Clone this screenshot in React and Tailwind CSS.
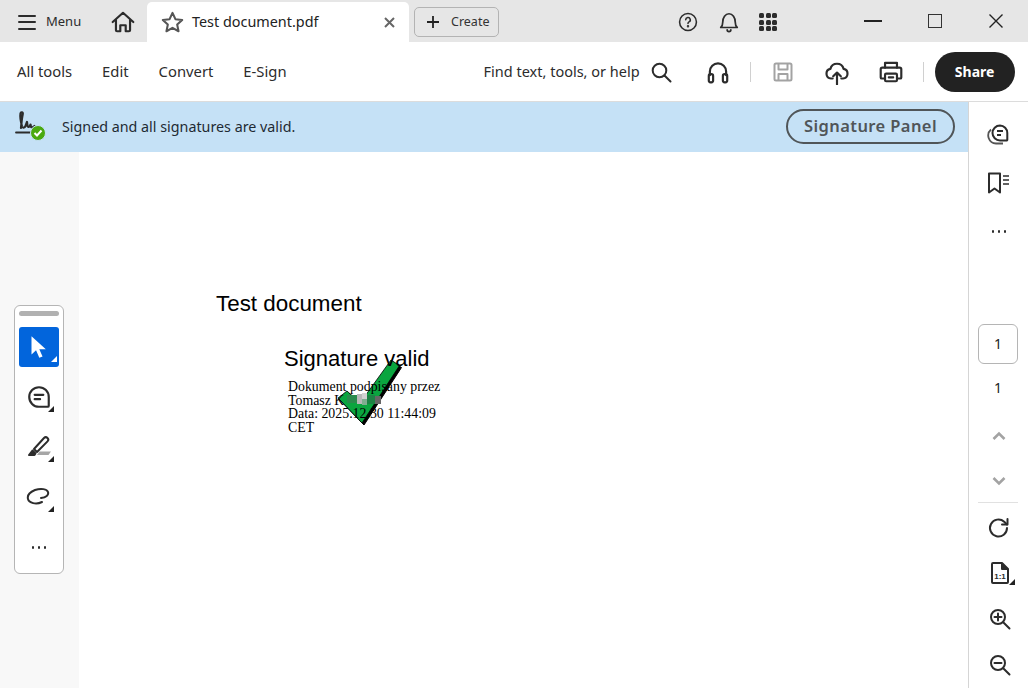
const ui = { fontFamily: '"Noto Sans", sans-serif' }

function Corner({ color = 'border-b-[#222]', className = '' }) {
  return <span className={`absolute w-0 h-0 border-l-[6px] border-l-transparent border-b-[6px] ${color} ${className}`} />
}

function Icon({ size = 24, children, className = '', stroke = '#2c2c2c', sw = 2 }) {
  return (
    <svg width={size} height={size} viewBox="0 0 24 24" fill="none" stroke={stroke} strokeWidth={sw} strokeLinecap="round" strokeLinejoin="round" className={className}>
      {children}
    </svg>
  )
}

function TitleBar() {
  return (
    <div className="h-[42px] bg-[#e6e6e6] flex items-end shrink-0 relative">
      <div className="h-[42px] w-[110px] flex items-center pl-[18px] pt-[2px] shrink-0">
        <div className="w-[18px] flex flex-col gap-[4.5px]">
          <div className="h-[2px] bg-[#2c2c2c] rounded" />
          <div className="h-[2px] bg-[#2c2c2c] rounded" />
          <div className="h-[2px] bg-[#2c2c2c] rounded" />
        </div>
        <span className="ml-[10px] text-[13px] text-[#2c2c2c]">Menu</span>
      </div>
      <div className="h-[42px] w-[37px] flex items-center pt-[2px] shrink-0">
        <Icon size={26}>
          <path d="M2.5 12 12 3.5 21.5 12M5.5 10v9.5a1 1 0 0 0 1 1h3v-5.5h5v5.5h3a1 1 0 0 0 1-1V10" />
        </Icon>
      </div>
      <div className="h-[40px] w-[262px] bg-white rounded-t-[5px] flex items-center pl-[13px] shrink-0">
        <Icon size={25} stroke="#555">
          <path d="M12 2.8l2.8 6 6.5.8-4.8 4.4 1.3 6.4-5.8-3.2-5.8 3.2 1.3-6.4-4.8-4.4 6.5-.8z" />
        </Icon>
        <span className="ml-[7px] text-[14.4px] text-[#222]">Test document.pdf</span>
        <svg width="11" height="11" viewBox="0 0 11 11" className="ml-auto mr-[14px]" stroke="#666" strokeWidth="2">
          <path d="M1 1l9 9M10 1l-9 9" />
        </svg>
      </div>
      <div className="h-[42px] flex items-center ml-[5px] pt-[2px] shrink-0">
        <div className="h-[30px] w-[85px] rounded-[5px] border border-[#b3b3b3] flex items-center pl-[11px]">
          <svg width="14" height="14" viewBox="0 0 14 14" stroke="#222" strokeWidth="1.8">
            <path d="M7 1v12M1 7h12" />
          </svg>
          <span className="ml-[11px] text-[12.5px] text-[#333]">Create</span>
        </div>
      </div>
      <div className="h-[42px] flex items-center ml-[178px] pt-[2px] shrink-0">
        <Icon size={22} sw={1.7}>
          <circle cx="12" cy="12" r="9.2" />
          <path d="M9.5 9.6a2.5 2.5 0 1 1 3.6 2.3c-.8.4-1.1.9-1.1 1.7" />
          <circle cx="12" cy="16.6" r=".5" fill="#2c2c2c" />
        </Icon>
        <Icon size={22} sw={1.9} className="ml-[19px]">
          <path d="M3 18c1.700-1.400 2.200-3 2.200-6 0-4.800 2.800-9 6.800-9s6.800 4.200 6.800 9c0 3 .5 4.600 2.200 6z" />
          <path d="M10 20.500a2 2 0 0 0 4 0" />
        </Icon>
        <div className="ml-[19px] grid grid-cols-3 gap-[1.5px] w-[18px]">
          {[...Array(9)].map((_, i) => <div key={i} className="h-[5px] bg-[#2c2c2c] rounded-[1.5px]" />)}
        </div>
      </div>
      <div className="h-[42px] flex items-center ml-[87px] shrink-0">
        <div className="w-[18px] h-[2px] bg-[#222] mb-[1px]" />
        <div className="w-[14px] h-[14px] border-[1.5px] border-[#333] ml-[46px] mb-[1px]" />
        <svg width="14" height="14" viewBox="0 0 14 14" stroke="#222" strokeWidth="1.4" className="ml-[47px] mb-[1px]">
          <path d="M.5.5l13 13M13.5.5l-13 13" />
        </svg>
      </div>
    </div>
  )
}

function Toolbar() {
  return (
    <div className="h-[60px] bg-white border-b border-[#dcdcdc] flex items-center pl-[17px] shrink-0 text-[#2c2c2c]">
      <span className="text-[14.8px]">All tools</span>
      <span className="text-[14.8px] ml-[30px]">Edit</span>
      <span className="text-[14.8px] ml-[30px]">Convert</span>
      <span className="text-[14.8px] ml-[30px]">E-Sign</span>
      <span className="text-[14.5px] ml-[197px]">Find text, tools, or help</span>
      <Icon size={24} sw={2} className="ml-[9px]">
        <circle cx="10.5" cy="10.5" r="6.8" />
        <path d="M15.5 15.5l6 6" />
      </Icon>
      <Icon size={26} sw={2} className="ml-[32px]">
        <path d="M4.5 15v-3.5a7.5 7.5 0 0 1 15 0V15" />
        <rect x="3.5" y="14" width="4" height="7.5" rx="1.6" />
        <rect x="16.5" y="14" width="4" height="7.5" rx="1.6" />
      </Icon>
      <div className="w-px h-[20px] bg-[#d0d0d0] ml-[19px]" />
      <Icon size={24} stroke="#a3a3a3" sw={2} className="ml-[20px]">
        <path d="M3.5 5a1.5 1.5 0 0 1 1.5-1.5h14a1.5 1.5 0 0 1 1.5 1.5v14a1.5 1.5 0 0 1-1.5 1.5H5A1.5 1.5 0 0 1 3.5 19z" />
        <path d="M7.5 4v5.5h9V4M7.5 20v-6h9v6" />
      </Icon>
      <Icon size={26} sw={2} className="ml-[29px]">
        <path d="M8 18H6.5a4.5 4.5 0 0 1-.6-8.9 6.3 6.3 0 0 1 12.2 0 4.5 4.5 0 0 1-.6 8.9H16" />
        <path d="M12 23.5V12.5M8.5 16l3.5-3.5 3.5 3.5" />
      </Icon>
      <Icon size={26} sw={2} className="ml-[28px]">
        <path d="M6.5 8V3.5h11V8" />
        <path d="M6 18H3.5a1 1 0 0 1-1-1v-7.5A1.5 1.5 0 0 1 4 8h16a1.5 1.5 0 0 1 1.500 1.500V17a1 1 0 0 1-1 1H18" />
        <rect x="6.500" y="13.500" width="11" height="7" rx="1" />
        <path d="M10 17h4" />
      </Icon>
      <div className="w-px h-[20px] bg-[#d0d0d0] ml-[19px]" />
      <div className="w-[80px] h-[40px] rounded-full bg-[#222] text-white text-[14px] font-bold flex items-center justify-center ml-[11px]">
        Share
      </div>
    </div>
  )
}

function Banner() {
  return (
    <div className="h-[50px] bg-[#c5e1f6] flex items-center shrink-0">
      <div className="relative w-[32px] h-[32px] ml-[14px] -mt-[2px]">
        <svg width="26" height="26" viewBox="0 0 26 26" fill="none" stroke="#2c2c2c" strokeWidth="2.200" strokeLinecap="round" strokeLinejoin="round" className="absolute left-0 top-0">
          <path d="M2 22.500h16" strokeWidth="1.800" />
          <path d="M7 18c.5-5 .8-10 1.700-13.500.6-2.500-1.700-3-2.200-1-.5 3 .5 9 1.500 13 .5 1.500 2.700 1.500 3.500-.5l1.500-4 .5 4c.5 1.500 2.500 1 3-1.500l.5 2.500c.8.8 2.500 0 3.500-1" />
        </svg>
        <div className="absolute left-[16px] top-[15px] w-[16px] h-[16px] rounded-full bg-[#4aa90f] border border-[#c5e1f6] flex items-center justify-center">
          <svg width="10" height="10" viewBox="0 0 10 10" fill="none" stroke="#fff" strokeWidth="2">
            <path d="M1.500 5l2.500 2.500 4.500-5" />
          </svg>
        </div>
      </div>
      <span className="ml-[16px] text-[14.3px] text-[#1f2a33]">Signed and all signatures are valid.</span>
      <div className="ml-auto mr-[13px] -mt-[1px] w-[169px] h-[35px] rounded-full border-[2.5px] border-[#505558] flex items-center justify-center text-[#505558] text-[16.5px] font-semibold tracking-[0.4px]">
        Signature Panel
      </div>
    </div>
  )
}

function QuickTools() {
  return (
    <div className="w-[79px] bg-[#f8f8f8] pl-[14px] pt-[153px] shrink-0">
      <div className="w-[50px] h-[269px] bg-white rounded-[6px] border border-[#b5b5b5] flex flex-col items-center pt-[5px]">
        <div className="w-[40px] h-[5px] rounded-full bg-[#b1b1b1]" />
        <div className="relative w-[40px] h-[40px] rounded-[3px] bg-[#0265dc] mt-[11px] flex items-center justify-center">
          <svg width="20" height="26" viewBox="0 0 18 24" className="-ml-[3px]">
            <path d="M3 2v17l4.200-4 3 7 3-1.300-3-6.700h6z" fill="#fff" />
          </svg>
          <Corner color="border-b-white" className="right-[2px] bottom-[5px]" />
        </div>
        <div className="relative w-[40px] h-[40px] mt-[10px] flex items-center justify-center">
          <Icon size={26} sw={2}>
            <path d="M12 3a9 9 0 1 0 0 18h8a1 1 0 0 0 1-1v-8a9 9 0 0 0-9-9z" />
            <path d="M8 10h8M8 14h5" />
          </Icon>
          <Corner className="right-[5px] bottom-[5px]" />
        </div>
        <div className="relative w-[40px] h-[40px] mt-[10px] flex items-center justify-center">
          <svg width="26" height="26" viewBox="0 0 26 26" fill="none" stroke="#2c2c2c" strokeWidth="2" strokeLinejoin="round">
            <path d="M8 15 18 4c1-1 2.500-1 3.500 0s1 2.400 0 3.400L11 18z" />
            <path d="M6.500 16.500 3 21h5.500l1-1.500z" fill="#2c2c2c" />
            <path d="M11 21l2.500-3.500H25L22.500 21z" fill="#a6a6a6" stroke="none" />
          </svg>
          <Corner className="right-[5px] bottom-[5px]" />
        </div>
        <div className="relative w-[40px] h-[40px] mt-[10px] flex items-center justify-center">
          <svg width="26" height="22" viewBox="0 0 26 22" fill="none" stroke="#2c2c2c" strokeWidth="2" strokeLinecap="round">
            <path d="M15 12c5-.5 8-3 7-6-1-3-7-4-13-2C4 6 1 9 2 13c1 4 8 6 14 3" />
          </svg>
          <Corner className="right-[5px] bottom-[5px]" />
        </div>
        <Dots className="mt-[29px]" />
      </div>
    </div>
  )
}

function Dots({ className = '' }) {
  return (
    <div className={`flex gap-[3.500px] ${className}`}>
      <div className="w-[2.500px] h-[2.500px] rounded-full bg-[#2c2c2c]" />
      <div className="w-[2.500px] h-[2.500px] rounded-full bg-[#2c2c2c]" />
      <div className="w-[2.500px] h-[2.500px] rounded-full bg-[#2c2c2c]" />
    </div>
  )
}

function PdfPage() {
  return (
    <div className="flex-1 bg-white relative overflow-hidden">
      {/* green tick sits under the signature text */}
      <svg width="70" height="72" viewBox="0 0 70 72" className="absolute left-[255px] top-[204px]">
        <path d="M4 42 L13 35 L26 47 L57 4 L65.500 9.500 L28 67 Z" fill="#000" stroke="#000" strokeWidth="1" transform="translate(2 2)" />
        <path d="M4 42 L13 35 L26 47 L57 4 L65.500 9.500 L28 67 Z" fill="#0aa53f" stroke="#000" strokeWidth="0.800" />
      </svg>
      <div className="absolute left-[137px] top-[139px] text-[22.400px] leading-[26px] text-black" style={{ fontFamily: '"Liberation Sans", sans-serif' }}>
        Test document
      </div>
      <div className="absolute left-[205px] top-[194px] text-[22px] leading-[26px] text-black" style={{ fontFamily: '"Liberation Sans", sans-serif' }}>
        Signature valid
      </div>
      <div className="absolute left-[209px] top-[228px] text-[13.850px] leading-[13.600px] text-black" style={{ fontFamily: '"Liberation Serif", serif' }}>
        <div>Dokument podpisany przez</div>
        <div>Tomasz K</div>
        <div>Data: 2025.12.30 11:44:09</div>
        <div>CET</div>
      </div>
      {/* pixelated part of the name */}
      <svg width="36" height="14" viewBox="0 0 36 14" className="absolute left-[268px] top-[240px]">
        <rect x="0" y="3" width="10" height="8" fill="#2a8a4c" />
        <rect x="10" y="2" width="5" height="10" fill="#b8b8b8" />
        <rect x="15" y="1" width="5" height="6" fill="#d2d2d2" />
        <rect x="15" y="7" width="5" height="6" fill="#7fae90" />
        <rect x="20" y="3" width="8" height="9" fill="#1d8245" />
        <rect x="28" y="4" width="6" height="8" fill="#666" />
      </svg>
    </div>
  )
}

function RightRail() {
  return (
    <div className="w-[60px] h-[586px] bg-white border-l border-[#d5d5d5] flex flex-col items-center shrink-0 pr-[1px]">
      <div className="h-[24px] mt-[20px]">
        <svg width="24" height="24" viewBox="0 0 24 24" fill="none" stroke="#2c2c2c" strokeWidth="2" strokeLinejoin="round">
          <path d="M14 3.500a7.500 7.500 0 1 0 0 15h6.500a.8.800 0 0 0 .8-.8V11A7.500 7.500 0 0 0 14 3.500z" />
          <path d="M11 9h6M11 13h4" strokeWidth="1.800" />
          <path d="M5 7.500a8 8 0 0 0 5 14h7" strokeWidth="1.800" stroke="#555" />
        </svg>
      </div>
      <div className="h-[24px] mt-[25px] relative">
        <svg width="24" height="24" viewBox="0 0 24 24" fill="none" stroke="#2c2c2c" strokeWidth="2" strokeLinejoin="round">
          <path d="M3 2.500h11v19l-5.500-4-5.500 4z" />
          <path d="M17 5h6M17 9h6M17 13h6" strokeWidth="1.600" />
        </svg>
      </div>
      <Dots className="mt-[35px] ml-[2px]" />
      <div className="w-[40px] h-[40px] rounded-[6px] border border-[#b5b5b5] mt-[91px] flex items-center justify-center text-[14px] text-[#222]" style={ui}>1</div>
      <div className="h-[20px] mt-[14px] text-[14px] leading-[20px] text-[#222]">1</div>
      <svg width="14" height="10" viewBox="0 0 14 10" fill="none" stroke="#a3a3a3" strokeWidth="2.600" className="mt-[33px] ml-[2px]">
        <path d="M1.500 8 7 2.500 12.500 8" />
      </svg>
      <svg width="14" height="10" viewBox="0 0 14 10" fill="none" stroke="#a3a3a3" strokeWidth="2.600" className="mt-[35px] ml-[2px]">
        <path d="M1.500 2 7 7.500 12.500 2" />
      </svg>
      <div className="w-[40px] h-px bg-[#e1e1e1] mt-[16px]" />
      <Icon size={24} sw={2} className="mt-[13px] ml-[2px]">
        <path d="M20 12a8.500 8.500 0 1 1-2.800-6.300L20 8.500" />
        <path d="M20.500 3v5.500H15" />
      </Icon>
      <div className="relative mt-[21px] h-[24px] ml-[4px]">
        <svg width="24" height="24" viewBox="0 0 24 24" fill="none" stroke="#2c2c2c" strokeWidth="2" strokeLinejoin="round">
          <path d="M5 2h9l6 6v13a1 1 0 0 1-1 1H5a1 1 0 0 1-1-1V3a1 1 0 0 1 1-1z" />
          <path d="M14 2v6h6" fill="#2c2c2c" />
          <text x="12" y="18" textAnchor="middle" fontSize="8" fontWeight="700" fill="#2c2c2c" stroke="none" fontFamily="Liberation Sans">1:1</text>
        </svg>
        <Corner className="-right-[3px] bottom-[0px]" />
      </div>
      <Icon size={24} sw={2} className="mt-[22px] ml-[4px]">
        <circle cx="10" cy="10" r="7" />
        <path d="M15.200 15.200l6.300 6.300M10 6.500v7M6.500 10h7" />
      </Icon>
      <Icon size={24} sw={2} className="mt-[22px] ml-[4px]">
        <circle cx="10" cy="10" r="7" />
        <path d="M15.200 15.200l6.300 6.300M6.500 10h7" />
      </Icon>
    </div>
  )
}

export default function App() {
  return (
    <div className="w-[1028px] h-[688px] overflow-hidden flex flex-col bg-white" style={ui}>
      <TitleBar />
      <Toolbar />
      <div className="flex-1 flex min-h-0">
        <div className="flex-1 flex flex-col min-w-0">
          <Banner />
          <div className="flex-1 flex min-h-0">
            <QuickTools />
            <PdfPage />
          </div>
        </div>
        <RightRail />
      </div>
    </div>
  )
}
